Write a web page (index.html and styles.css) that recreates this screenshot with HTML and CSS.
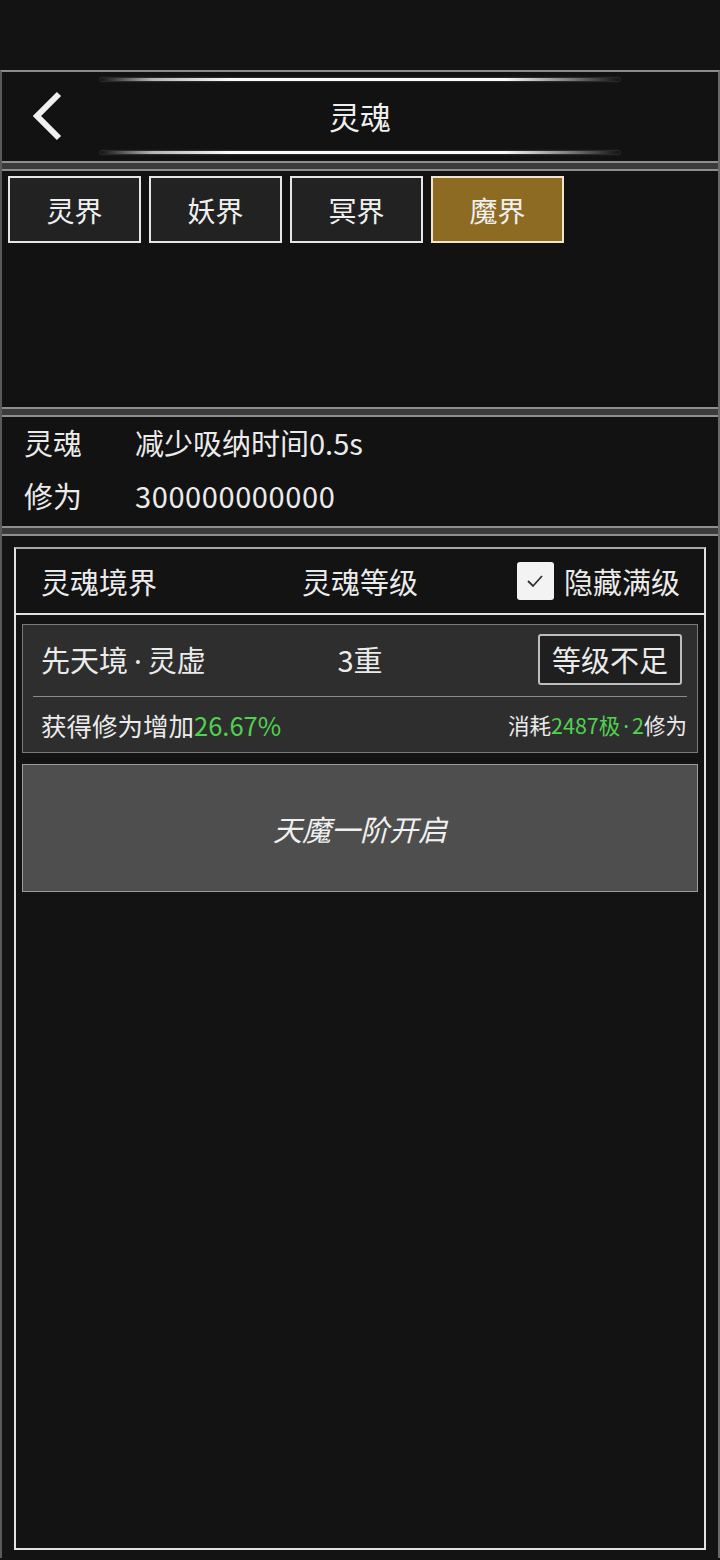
FILE: index.html
```html
<!DOCTYPE html>
<html lang="zh">
<head>
<meta charset="utf-8">
<link rel="stylesheet" href="styles.css">
</head>
<body>
<div class="status"></div>
<div class="app">
  <header class="header">
    <div class="deco"></div>
    <div class="header-row">
      <span class="back">
        <svg width="34" height="52" viewBox="0 0 34 52"><path d="M29 4 L7 26 L29 48" fill="none" stroke="#f0f0f0" stroke-width="6"/></svg>
      </span>
      <span class="title">灵魂</span>
    </div>
    <div class="deco"></div>
  </header>
  <div class="sep"></div>
  <section class="tabs-area">
    <div class="tabs">
      <div class="tab">灵界</div>
      <div class="tab">妖界</div>
      <div class="tab">冥界</div>
      <div class="tab active">魔界</div>
    </div>
  </section>
  <div class="sep"></div>
  <section class="info">
    <div class="info-row"><span class="info-key">灵魂</span><span>减少吸纳时间0.5s</span></div>
    <div class="info-row"><span class="info-key">修为</span><span class="num">300000000000</span></div>
  </section>
  <div class="sep"></div>
  <section class="content">
    <div class="table">
      <div class="thead">
        <span class="th-left">灵魂境界</span>
        <span class="th-mid">灵魂等级</span>
        <span class="th-right">
          <span class="checkbox"><svg width="20" height="16" viewBox="0 0 20 16"><path d="M3 8 L8 13 L17 3" fill="none" stroke="#333" stroke-width="1.8"/></svg></span>
          隐藏满级
        </span>
      </div>
      <div class="tbody">
        <div class="card">
          <div class="card-top">
            <span class="realm">先天境<span class="dot">·</span>灵虚</span>
            <span class="level">3重</span>
            <span class="btn">等级不足</span>
          </div>
          <div class="divider"></div>
          <div class="card-bottom">
            <span class="gain">获得修为增加<em class="green">26.67%</em></span>
            <span class="cost">消耗<em class="green">2487极<span class="dot">·</span>2</em>修为</span>
          </div>
        </div>
        <div class="unlock">天魔一阶开启</div>
      </div>
    </div>
  </section>
</div>
</body>
</html>
```

FILE: styles.css
```css
html, body {
  margin: 0;
  padding: 0;
  background: #131313;
}
body {
  width: 720px;
  height: 1560px;
  overflow: hidden;
  font-family: "Noto Sans CJK SC", "Noto Sans", sans-serif;
  color: #ebebeb;
}
.status {
  height: 70px;
  background: #131313;
}
.app {
  border-top: 2px solid #8c8c8c;
  border-left: 2px solid #5a5a5a;
  border-right: 2px solid #6a6a6a;
  height: 1486px;
  display: flex;
  flex-direction: column;
}
.header {
  height: 89px;
  display: flex;
  flex-direction: column;
  justify-content: space-between;
  padding: 6px 0 7px;
  box-sizing: border-box;
  background: #121212;
}
.deco {
  margin: 0 98px;
  height: 3px;
  border-radius: 2px;
  background: linear-gradient(90deg, rgba(255,255,255,0) 0%, rgba(220,220,220,0.8) 10%, #fafafa 25%, #fafafa 78%, rgba(200,200,200,0.6) 90%, rgba(255,255,255,0) 100%);
  box-shadow: 0 0 2px rgba(200,200,200,0.5);
}
.header-row {
  position: relative;
  display: flex;
  align-items: center;
  justify-content: center;
  height: 60px;
}
.back {
  position: absolute;
  left: 28px;
  top: 4px;
  display: flex;
}
.title {
  font-size: 31px;
  color: #f0f0f0;
  margin-top: -2px;
}
.sep {
  height: 6px;
  background: #3b3b3b;
  border-top: 2px solid #8e8e8e;
  border-bottom: 2px solid #8e8e8e;
}
.tabs-area {
  height: 236px;
  padding: 5px 6px 0;
  box-sizing: border-box;
  background: #121212;
}
.tabs {
  display: flex;
  gap: 8px;
}
.tab {
  width: 129px;
  height: 63px;
  border: 2px solid #e6e6e6;
  background: #222;
  display: flex;
  align-items: center;
  justify-content: center;
  font-size: 28px;
  color: #f0f0f0;
}
.tab.active {
  background: #8e6b22;
  border-color: #f0e6cc;
}
.info {
  height: 109px;
  padding: 0 0 0 22px;
  box-sizing: border-box;
  background: #121212;
  font-size: 29px;
}
.info-row {
  height: 53px;
  display: flex;
  align-items: center;
}
.info-row:first-child {
  margin-top: -2px;
}
.info-key {
  width: 111px;
}
.num {
  letter-spacing: 0.6px;
}
.content {
  flex: 1;
  padding: 11px 12px 8px;
  background: #131313;
}
.table {
  height: 100%;
  box-sizing: border-box;
  border: 2px solid #e2e2e2;
  border-top-color: #a8a8a8;
  background: #131313;
  display: flex;
  flex-direction: column;
}
.thead {
  height: 64px;
  border-bottom: 2px solid #e2e2e2;
  display: flex;
  align-items: center;
  position: relative;
  font-size: 29px;
  padding: 0 24px 0 25px;
}
.th-left {
  flex: 1;
}
.th-mid {
  position: absolute;
  left: 0;
  right: 0;
  text-align: center;
  pointer-events: none;
}
.th-right {
  display: flex;
  align-items: center;
  gap: 10px;
}
.checkbox {
  width: 37px;
  height: 38px;
  background: #f3f3f3;
  border-radius: 3px;
  display: flex;
  align-items: center;
  justify-content: center;
}
.tbody {
  padding: 9px 6px;
  display: flex;
  flex-direction: column;
  gap: 11px;
}
.card {
  border: 1px solid #7a7a7a;
  background: #2e2e2e;
}
.card-top {
  height: 71px;
  position: relative;
  display: flex;
  align-items: center;
  justify-content: space-between;
  padding: 0 15px 0 18px;
  font-size: 29px;
}
.card-top > span {
  margin-top: -3px;
}
.dot {
  font-family: "Noto Sans", sans-serif;
}
.realm .dot {
  margin: 0 6px;
}
.cost .dot {
  margin: 0 3px;
}
.level {
  position: absolute;
  left: 0;
  right: 0;
  text-align: center;
  pointer-events: none;
}
.btn {
  width: 140px;
  height: 47px;
  border: 2px solid #bdbdbd;
  border-radius: 3px;
  background: #1f1f1f;
  display: flex;
  align-items: center;
  justify-content: center;
  font-size: 29px;
}
.divider {
  height: 1px;
  background: #8a8a8a;
  margin: 0 10px;
}
.card-bottom {
  height: 55px;
  display: flex;
  align-items: center;
  justify-content: space-between;
  padding: 0 10px 0 18px;
}
.gain {
  font-size: 25.5px;
}
.cost {
  font-size: 21.5px;
}
.green {
  font-style: normal;
  color: #4fd24f;
}
.unlock {
  height: 126px;
  border: 1px solid #9a9a9a;
  background: #4e4e4e;
  display: flex;
  align-items: center;
  justify-content: center;
  font-size: 29px;
  font-style: italic;
  color: #f0f0f0;
}
```
